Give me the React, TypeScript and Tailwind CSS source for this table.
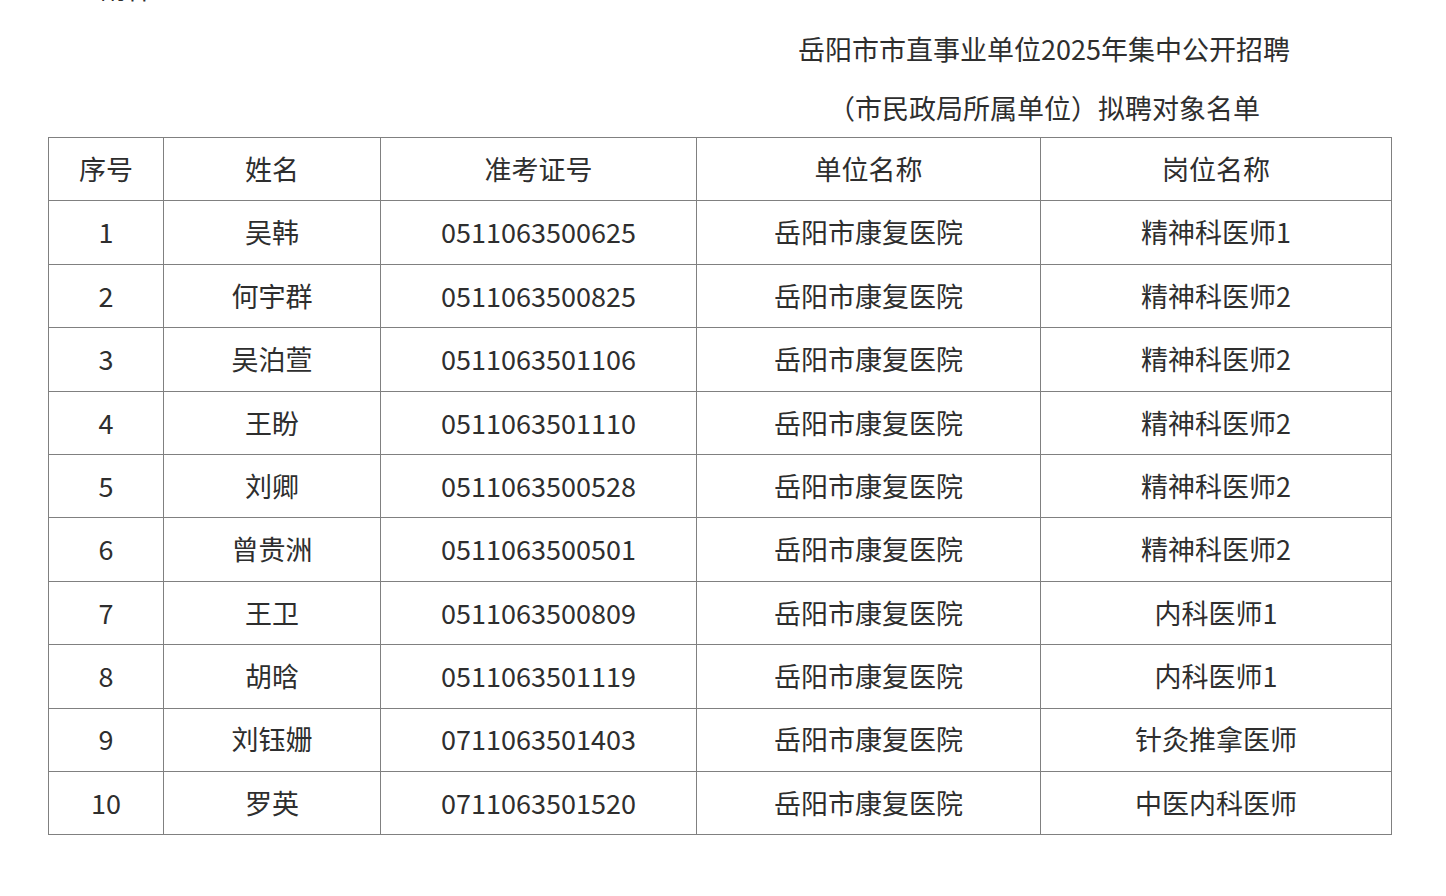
import React from 'react';

const rows = [
  ['1', '吴韩', '0511063500625', '岳阳市康复医院', '精神科医师1'],
  ['2', '何宇群', '0511063500825', '岳阳市康复医院', '精神科医师2'],
  ['3', '吴泊萱', '0511063501106', '岳阳市康复医院', '精神科医师2'],
  ['4', '王盼', '0511063501110', '岳阳市康复医院', '精神科医师2'],
  ['5', '刘卿', '0511063500528', '岳阳市康复医院', '精神科医师2'],
  ['6', '曾贵洲', '0511063500501', '岳阳市康复医院', '精神科医师2'],
  ['7', '王卫', '0511063500809', '岳阳市康复医院', '内科医师1'],
  ['8', '胡晗', '0511063501119', '岳阳市康复医院', '内科医师1'],
  ['9', '刘钰姗', '0711063501403', '岳阳市康复医院', '针灸推拿医师'],
  ['10', '罗英', '0711063501520', '岳阳市康复医院', '中医内科医师'],
];

const headers = ['序号', '姓名', '准考证号', '单位名称', '岗位名称'];
const widths = ['w-[115px]', 'w-[217px]', 'w-[316px]', 'w-[344px]', 'w-[351px]'];

export default function App() {
  return (
    <div className="min-h-screen w-full overflow-hidden bg-white text-[#2e2e2e] font-['Noto_Sans_CJK_SC','Noto_Sans',sans-serif]">
      {/* cut-off attachment label */}
      <div className="-mt-[27px] pl-[100px] text-[27px] leading-[30px]">附件</div>

      {/* Title */}
      <div className="mt-[16px] ml-[697px] w-[694px] text-center text-[27px] leading-[59px]">
        <div>岳阳市市直事业单位2025年集中公开招聘</div>
        <div>（市民政局所属单位）拟聘对象名单</div>
      </div>

      {/* Table */}
      <div className="pl-[48px]">
        <table className="table-fixed border-collapse text-[27px]">
          <thead>
            <tr className="h-[63.4px]">
              {headers.map((h, i) => (
                <th key={h} className={`${widths[i]} border border-[#808080] p-0 text-center font-normal`}>
                  {h}
                </th>
              ))}
            </tr>
          </thead>
          <tbody>
            {rows.map((r) => (
              <tr key={r[0]} className="h-[63.4px]">
                {r.map((c, i) => (
                  <td key={i} className="border border-[#808080] p-0 text-center">
                    {c}
                  </td>
                ))}
              </tr>
            ))}
          </tbody>
        </table>
      </div>
    </div>
  );
}
